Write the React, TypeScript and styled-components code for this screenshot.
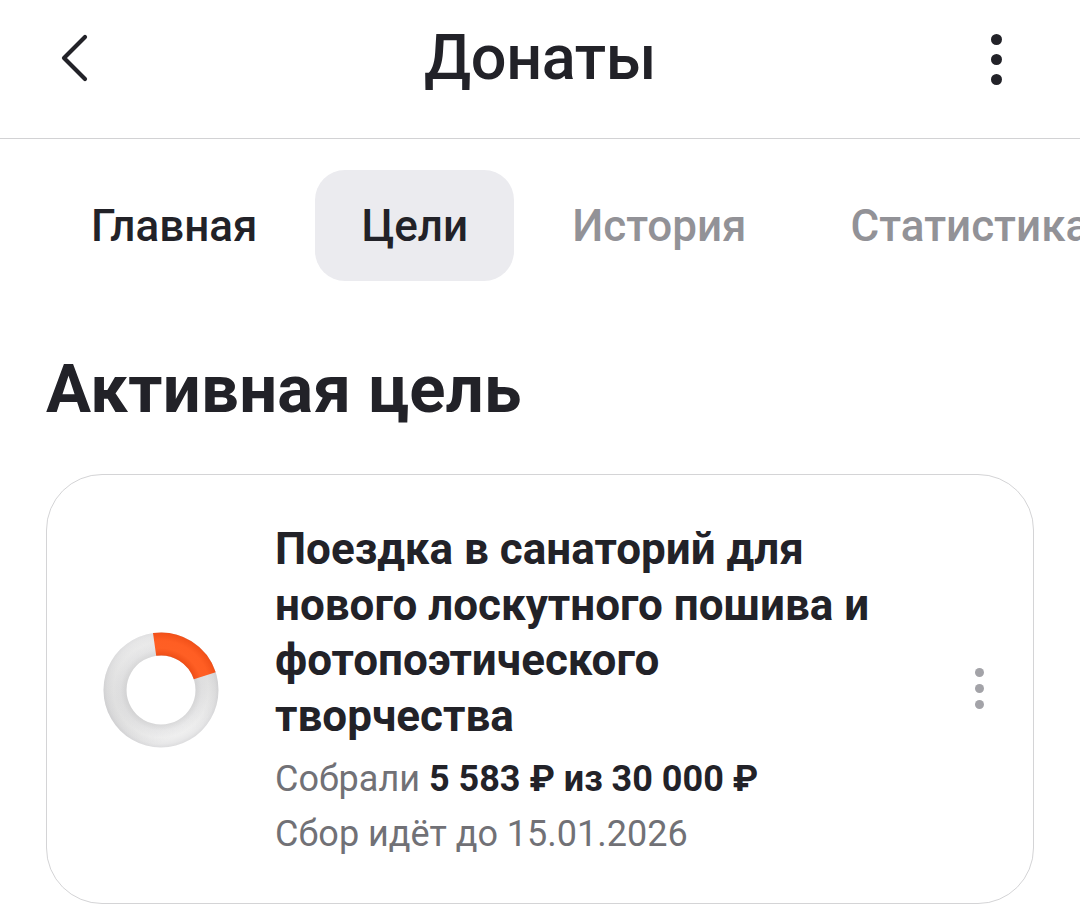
import React from "react";
import styled, { createGlobalStyle } from "styled-components";

const Global = createGlobalStyle`
  html, body { margin: 0; padding: 0; background: #ffffff; }
  body { font-family: Roboto, "Noto Sans", sans-serif; color: #222228; }
  * { box-sizing: border-box; }
`;

const Page = styled.div`
  width: 1080px;
  height: 904px;
  overflow: hidden;
  background: #fff;
`;

const Header = styled.header`
  height: 139px;
  border-bottom: 1.5px solid #d2d2d4;
  display: grid;
  grid-template-columns: 1fr auto 1fr;
  align-items: center;
  padding: 0 53px 22px 53px;
`;

const BackButton = styled.button`
  justify-self: start;
  width: 44px;
  height: 60px;
  border: 0;
  background: none;
  padding: 0;
  display: flex;
  align-items: center;
  justify-content: center;
`;

const MenuSlot = styled.div`
  justify-self: end;
  display: flex;
  padding: 2px 25px 0 0;
`;

const Title = styled.h1`
  margin: 0;
  font-family: Roboto, sans-serif;
  font-weight: 500;
  font-size: 63px;
  line-height: 76px;
  letter-spacing: -0.4px;
  color: #222228;
`;

const Tabs = styled.nav`
  display: flex;
  gap: 12px;
  padding: 31px 0 0 45px;
  white-space: nowrap;
  overflow: hidden;
`;

const Tab = styled.div<{ $active?: boolean; $dim?: boolean }>`
  height: 111px;
  padding: 0 46px;
  display: flex;
  align-items: center;
  border-radius: 30px;
  font-family: Roboto, sans-serif;
  font-weight: 500;
  font-size: 44px;
  color: ${(p) => (p.$dim ? "#929297" : "#222228")};
  background: ${(p) => (p.$active ? "#ebebef" : "transparent")};
  flex-shrink: 0;
`;

const Section = styled.section`
  padding: 0 46px;
`;

const SectionTitle = styled.h2`
  margin: 68px 0 45px;
  font-family: Roboto, sans-serif;
  font-weight: 700;
  font-size: 67px;
  line-height: 80px;
  color: #222228;
  letter-spacing: 0.3px;
`;

const Card = styled.div`
  border: 1.5px solid #d4d4d6;
  border-radius: 56px;
  height: 430px;
  display: flex;
  align-items: center;
  padding: 0 44px 0 56px;
  gap: 56px;
`;

const Ring = styled.svg`
  width: 116px;
  height: 116px;
  flex-shrink: 0;
  margin-top: 2px;
`;

const Info = styled.div`
  flex: 1;
  display: flex;
  flex-direction: column;
  margin-top: 6px;
`;

const GoalTitle = styled.div`
  max-width: 605px;
  font-family: Roboto, sans-serif;
  font-weight: 700;
  font-size: 44px;
  line-height: 55.5px;
  color: #222228;
  margin-bottom: 8px;
`;

const Meta = styled.div`
  font-family: Roboto, sans-serif;
  font-weight: 400;
  font-size: 36px;
  line-height: 55px;
  color: #717176;
`;

const Strong = styled.b`
  font-weight: 700;
  color: #222228;
`;

const Dots = styled.div<{ $size: number; $gap: number; $color: string }>`
  display: flex;
  flex-direction: column;
  align-items: center;
  gap: ${(p) => p.$gap}px;
  flex-shrink: 0;
  span {
    width: ${(p) => p.$size}px;
    height: ${(p) => p.$size}px;
    border-radius: 50%;
    background: ${(p) => p.$color};
  }
`;

const CardMenu = styled.div`
  width: 20px;
  display: flex;
  justify-content: center;
  margin-top: -2px;
`;

function Kebab({ size, gap, color }: { size: number; gap: number; color: string }) {
  return (
    <Dots $size={size} $gap={gap} $color={color}>
      <span />
      <span />
      <span />
    </Dots>
  );
}

const RING_PATH =
  "M 58 0.5 A 57.5 57.5 0 1 1 57.99 0.5 Z M 58 23.5 A 34.5 34.5 0 1 0 58.01 23.5 Z";

export default function App() {
  return (
    <Page>
      <Global />
      <Header>
        <BackButton aria-label="Назад">
          <svg width="30" height="48" viewBox="0 0 30 48" fill="none">
            <path d="M25 3 L4 24 L25 45" stroke="#222228" strokeWidth="4.2" strokeLinecap="round" strokeLinejoin="round" />
          </svg>
        </BackButton>
        <Title>Донаты</Title>
        <MenuSlot>
          <Kebab size={11} gap={9} color="#222228" />
        </MenuSlot>
      </Header>
      <Tabs>
        <Tab>Главная</Tab>
        <Tab $active>Цели</Tab>
        <Tab $dim>История</Tab>
        <Tab $dim>Статистика</Tab>
      </Tabs>
      <Section>
        <SectionTitle>Активная цель</SectionTitle>
        <Card>
          <Ring viewBox="0 0 116 116">
            <defs>
              <radialGradient id="ringBase" cx="58" cy="58" r="58" gradientUnits="userSpaceOnUse">
                <stop offset="0.59" stopColor="#e6e6e7" />
                <stop offset="0.7" stopColor="#f4f4f5" />
                <stop offset="0.82" stopColor="#f7f7f7" />
                <stop offset="0.93" stopColor="#eeeeef" />
                <stop offset="1" stopColor="#e1e1e3" />
              </radialGradient>
              <radialGradient id="ringOrange" cx="58" cy="58" r="58" gradientUnits="userSpaceOnUse">
                <stop offset="0.59" stopColor="#ee4d16" />
                <stop offset="0.72" stopColor="#ff5f24" />
                <stop offset="0.85" stopColor="#ff5e23" />
                <stop offset="1" stopColor="#f04f18" />
              </radialGradient>
              <linearGradient id="ringShade" x1="0" y1="0" x2="0.4" y2="1">
                <stop offset="0" stopColor="#ffffff" stopOpacity="0.35" />
                <stop offset="1" stopColor="#000000" stopOpacity="0.03" />
              </linearGradient>
            </defs>
            <path d={RING_PATH} fill="url(#ringBase)" fillRule="evenodd" />
            <path d={RING_PATH} fill="url(#ringShade)" fillRule="evenodd" />
            <path
              d="M 51.6 12.46 A 46 46 0 0 1 101.75 43.79"
              fill="none"
              stroke="url(#ringOrange)"
              strokeWidth="23"
            />
          </Ring>
          <Info>
            <GoalTitle>Поездка в санаторий для нового лоскутного пошива и фотопоэтического творчества</GoalTitle>
            <Meta>
              Собрали <Strong>5 583 ₽ из 30 000 ₽</Strong>
            </Meta>
            <Meta>Сбор идёт до 15.01.2026</Meta>
          </Info>
          <CardMenu>
            <Kebab size={9} gap={7} color="#a3a3a8" />
          </CardMenu>
        </Card>
      </Section>
    </Page>
  );
}
